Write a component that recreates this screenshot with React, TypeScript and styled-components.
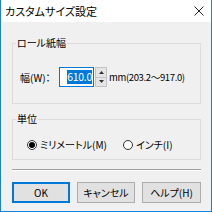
import React from 'react';
import styled, { createGlobalStyle } from 'styled-components';

const Global = createGlobalStyle`
	html, body { margin: 0; padding: 0; background: #fff; }
	* { box-sizing: border-box; }
	body {
		font-family: "Noto Sans CJK JP", "Noto Sans", sans-serif;
		font-feature-settings: "palt";
		font-size: 10px;
		color: #000;
		white-space: nowrap;
	}
`;

const Window = styled.div`
	width: 212px;
	height: 212px;
	display: flex;
	flex-direction: column;
	border: 1px solid #1a7fd6;
	border-top: none;
	background: #f0f0f0;
`;

const TitleBar = styled.div`
	height: 22px;
	background: #fff;
	display: flex;
	align-items: center;
	justify-content: space-between;
	padding: 0 7px 0 4px;
	font-size: 11px;
`;

const Body = styled.div`
	flex: 1;
	display: flex;
	flex-direction: column;
	padding: 21px 10px 0 11px;
`;

const Group = styled.div<{ $h: number; $top?: number }>`
	position: relative;
	height: ${p => p.$h}px;
	margin-top: ${p => p.$top ?? 0}px;
	border: 1px solid #dcdcdc;
`;

const Legend = styled.span`
	position: absolute;
	top: -8px;
	left: 3px;
	padding: 0 1px;
	background: #f0f0f0;
	line-height: 14px;
`;

const Row = styled.div`
	display: flex;
	align-items: center;
	padding: 23px 0 0 7px;
`;

const Label = styled.span`
	width: 39px;
`;

const Input = styled.div`
	width: 35px;
	height: 20px;
	background: #fff;
	border: 1px solid #0078d7;
	display: flex;
	align-items: center;
	justify-content: flex-end;
	padding-right: 1px;
	span {
		background: #0078d7;
		color: #fff;
		line-height: 14px;
		font-size: 10.5px;
		letter-spacing: -0.3px;
	}
`;

const Spin = styled.div`
	width: 12px;
	height: 20px;
	margin-left: 1px;
	display: flex;
	flex-direction: column;
`;

const SpinBtn = styled.div`
	flex: 1;
	background: #e5e5e5;
	border: 1px solid #c4c4c4;
	display: flex;
	align-items: center;
	justify-content: center;
	&:first-child { border-bottom: none; }
`;

const Range = styled.span`
	margin-left: 2px;
	font-size: 9.5px;
	letter-spacing: -0.35px;
`;

const Radios = styled.div`
	display: flex;
	align-items: center;
	padding: 17px 0 0 14px;
`;

const Radio = styled.label<{ $w: number }>`
	display: flex;
	align-items: center;
	gap: 3px;
	width: ${p => p.$w}px;
`;

const Circle = styled.span<{ $on?: boolean }>`
	width: 10px;
	height: 10px;
	border-radius: 50%;
	border: 1px solid #333;
	background: #fff;
	display: flex;
	align-items: center;
	justify-content: center;
	&::after {
		content: '';
		width: 6px;
		height: 6px;
		border-radius: 50%;
		background: ${p => (p.$on ? '#000' : 'transparent')};
	}
`;

const Separator = styled.div`
	margin-top: 9px;
	height: 2px;
	border-top: 1px solid #a0a0a0;
	border-bottom: 1px solid #fff;
`;

const Buttons = styled.div`
	margin-top: 11px;
	display: flex;
	gap: 7px;
`;

const Button = styled.button<{ $focus?: boolean; $w: number }>`
	width: ${p => p.$w}px;
	height: 21px;
	background: #e1e1e1;
	border: 1px solid ${p => (p.$focus ? '#0078d7' : '#adadad')};
	box-shadow: ${p => (p.$focus ? 'inset 0 0 0 1px #0078d7' : 'none')};
	font: inherit;
	font-size: 10px;
	padding: 0;
	color: #000;
`;

const Arrow = ({ up }: { up?: boolean }) => (
	<svg width="5" height="3" viewBox="0 0 5 3">
		<path d={up ? 'M0 3 L2.5 0 L5 3 Z' : 'M0 0 L2.5 3 L5 0 Z'} fill="#333" />
	</svg>
);

export default function App() {
	return (
		<>
			<Global />
			<Window>
				<TitleBar>
					<span>カスタムサイズ設定</span>
					<svg width="10" height="10" viewBox="0 0 10 10">
						<path d="M0.5 0.5 L9.5 9.5 M9.5 0.5 L0.5 9.5" stroke="#222" strokeWidth="1" />
					</svg>
				</TitleBar>
				<Body>
					<Group $h={61}>
						<Legend>ロール紙幅</Legend>
						<Row>
							<Label>幅(W)：</Label>
							<Input><span>610.0</span></Input>
							<Spin>
								<SpinBtn><Arrow up /></SpinBtn>
								<SpinBtn><Arrow /></SpinBtn>
							</Spin>
							<Range>mm(203.2～917.0)</Range>
						</Row>
					</Group>
					<Group $h={41} $top={15}>
						<Legend>単位</Legend>
						<Radios>
							<Radio $w={96}><Circle $on />ミリメートル(M)</Radio>
							<Radio $w={60}><Circle />インチ(I)</Radio>
						</Radios>
					</Group>
					<Separator />
					<Buttons>
						<Button $focus $w={58}>OK</Button>
						<Button $w={58}>キャンセル</Button>
						<Button $w={59}>ヘルプ(H)</Button>
					</Buttons>
				</Body>
			</Window>
		</>
	);
}
